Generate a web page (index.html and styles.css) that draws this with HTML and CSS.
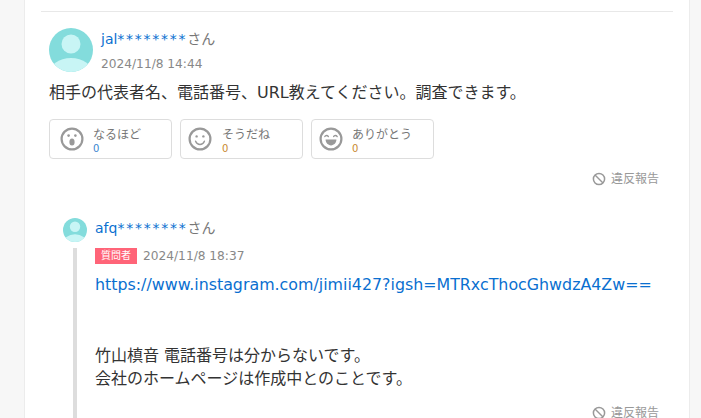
FILE: index.html
```html
<!DOCTYPE html>
<html lang="ja">
<head>
<meta charset="utf-8">
<title>回答</title>
<link rel="stylesheet" href="styles.css">
</head>
<body>
<main class="card">
  <article class="answer">
    <header class="head">
      <svg class="avatar" viewBox="0 0 44 44"><defs><clipPath id="a1"><circle cx="22" cy="22" r="22"/></clipPath></defs><circle cx="22" cy="22" r="22" fill="#83dcdc"/><g clip-path="url(#a1)"><circle cx="22" cy="16" r="9.5" fill="#c8f5f5"/><ellipse cx="22" cy="46" rx="22" ry="16" fill="#c8f5f5"/></g></svg>
      <div class="meta">
        <div class="name"><a class="user">jal<span class="mask">********</span></a>さん</div>
        <div class="date">2024/11/8 14:44</div>
      </div>
    </header>
    <p class="body">相手の代表者名、電話番号、URL教えてください。調査できます。</p>
    <div class="reactions">
      <div class="reaction">
        <svg class="face" viewBox="0 0 24 24"><circle cx="12" cy="12" r="10.4" fill="none" stroke="#999" stroke-width="2.2"/><circle cx="8.6" cy="8.6" r="1.3" fill="#999"/><circle cx="15.4" cy="8.6" r="1.3" fill="#999"/><ellipse cx="12" cy="15" rx="2.6" ry="3.6" fill="#999"/></svg>
        <div class="label"><span>なるほど</span><span class="count blue">0</span></div>
      </div>
      <div class="reaction">
        <svg class="face" viewBox="0 0 24 24"><circle cx="12" cy="12" r="10.4" fill="none" stroke="#999" stroke-width="2.2"/><circle cx="8.6" cy="9.4" r="1.2" fill="#999"/><circle cx="15.4" cy="9.4" r="1.2" fill="#999"/><path d="M7.6 14.2c1 2.3 2.6 3.3 4.4 3.3s3.4-1 4.4-3.3" fill="none" stroke="#999" stroke-width="1.4" stroke-linecap="round"/></svg>
        <div class="label"><span>そうだね</span><span class="count orange">0</span></div>
      </div>
      <div class="reaction">
        <svg class="face" viewBox="0 0 24 24"><circle cx="12" cy="12" r="10.4" fill="none" stroke="#999" stroke-width="2.2"/><path d="M5.8 9.6c.6-1.5 2.8-1.5 3.6 0M14.6 9.6c.6-1.5 2.8-1.5 3.6 0" fill="none" stroke="#999" stroke-width="1.3" stroke-linecap="round"/><path d="M6.6 12.6h10.8c0 3.4-2.4 5.8-5.4 5.8s-5.4-2.4-5.4-5.8z" fill="#999"/></svg>
        <div class="label"><span>ありがとう</span><span class="count orange">0</span></div>
      </div>
    </div>
    <div class="report">
      <svg class="ban" viewBox="0 0 14 14"><circle cx="7" cy="7" r="5.6" fill="none" stroke="#999" stroke-width="1.5"/><path d="M3 3l8 8" stroke="#999" stroke-width="1.5"/></svg>
      <span>違反報告</span>
    </div>
  </article>
  <article class="reply">
    <header class="reply-head">
      <svg class="avatar-small" viewBox="0 0 44 44"><defs><clipPath id="a2"><circle cx="22" cy="22" r="22"/></clipPath></defs><circle cx="22" cy="22" r="22" fill="#83dcdc"/><g clip-path="url(#a2)"><circle cx="22" cy="16" r="9.5" fill="#c8f5f5"/><ellipse cx="22" cy="46" rx="22" ry="16" fill="#c8f5f5"/></g></svg>
      <div class="name"><a class="user">afq<span class="mask">********</span></a>さん</div>
    </header>
    <div class="thread">
      <div class="badge-row"><span class="badge">質問者</span><span class="date">2024/11/8 18:37</span></div>
      <p class="link-line"><a class="link">https://www.instagram.com/jimii427?igsh=MTRxcThocGhwdzA4Zw==</a></p>
      <p class="reply-body">竹山槙音 電話番号は分からないです。<br>会社のホームページは作成中とのことです。</p>
      <div class="report report-last">
        <svg class="ban" viewBox="0 0 14 14"><circle cx="7" cy="7" r="5.6" fill="none" stroke="#999" stroke-width="1.5"/><path d="M3 3l8 8" stroke="#999" stroke-width="1.5"/></svg>
        <span>違反報告</span>
      </div>
    </div>
  </article>
</main>
</body>
</html>
```
FILE: styles.css
```css
* { box-sizing: border-box; }
html, body { margin: 0; height: 418px; overflow: hidden; }
body {
  background: #f7f7f7;
  font-family: "DejaVu Sans", "Noto Sans CJK JP", sans-serif;
  color: #333;
}
.card {
  margin-left: 24px;
  width: 666px;
  height: 418px;
  background: #fff;
  border-left: 1px solid #ececec;
  border-right: 1px solid #ececec;
  padding: 11px 16px 0;
  overflow: hidden;
}
.answer { border-top: 1px solid #e8e8e8; padding: 16px 14px 0 8px; }
.head { display: flex; gap: 8px; align-items: flex-start; }
.avatar { width: 44px; height: 44px; flex: none; }
.meta { display: flex; flex-direction: column; gap: 6px; padding-top: 1px; }
.name { font-size: 14px; line-height: 20px; color: #777; }
.user { color: #0a6fd0; }
.mask { letter-spacing: 1.75px; }
.date { font-size: 12.2px; line-height: 18px; color: #888; }
.body { margin: 7px 0 0; font-size: 16px; line-height: 26px; color: #333; }
.reactions { display: flex; gap: 8px; margin-top: 13px; }
.reaction {
  width: 123px;
  height: 40px;
  border: 1px solid #ddd;
  border-radius: 4px;
  display: flex;
  align-items: center;
  padding-left: 7px;
  gap: 10px;
}
.reaction:first-child { padding-left: 10px; gap: 9px; }
.reaction:last-child { gap: 9px; }
.face { width: 24px; height: 24px; flex: none; }
.label { display: flex; flex-direction: column; font-size: 12px; line-height: 16px; color: #777; padding-top: 4px; }
.count { font-size: 10px; line-height: 12px; }
.blue { color: #3a86d0; }
.orange { color: #c98a2e; }
.report {
  display: flex;
  justify-content: flex-end;
  align-items: center;
  gap: 5px;
  margin-top: 11px;
  font-size: 12px;
  line-height: 18px;
  color: #999;
}
.ban { width: 14px; height: 14px; }
.reply { padding: 30px 14px 0 22px; }
.reply-head { display: flex; align-items: center; gap: 8px; }
.reply-head .name { margin-top: -5px; }
.avatar-small { width: 24px; height: 24px; flex: none; }
.thread {
  margin-left: 10px;
  margin-top: 8px;
  border-left: 4px solid #ddd;
  padding-left: 18px;
  height: 200px;
}
.badge-row { display: flex; align-items: center; gap: 6px; height: 16px; margin-top: -2px; }
.badge {
  background: #ff6478;
  color: #fff;
  font-size: 10px;
  line-height: 16px;
  width: 42px;
  text-align: center;
  white-space: nowrap;
}
.badge-row .date { margin-top: -1px; }
.link-line { margin: 9px 0 0; font-size: 15.85px; line-height: 24px; white-space: nowrap; }
.link { color: #0a6fd0; }
.reply-body { margin: 47px 0 0; font-size: 16px; line-height: 23px; color: #333; }
.report-last { margin-top: 14px; }
```
